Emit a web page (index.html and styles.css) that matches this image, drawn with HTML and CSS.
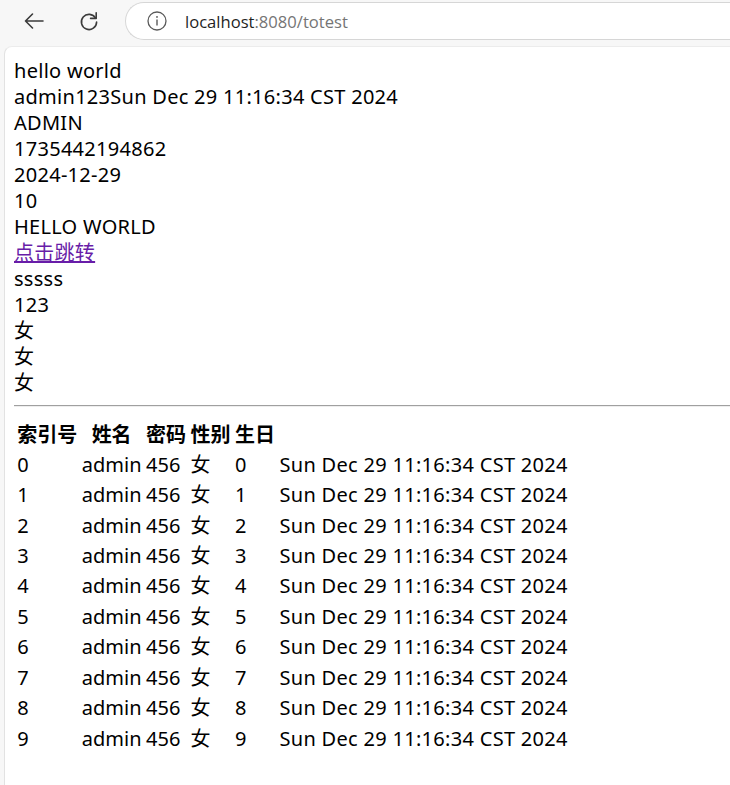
FILE: index.html
```html
<!DOCTYPE html>
<html>
<head>
<meta charset="utf-8">
<title>totest</title>
<link rel="stylesheet" href="styles.css">
</head>
<body>
<div class="chrome">
  <div class="nav-btn back">
    <svg width="24" height="24" viewBox="0 0 24 24"><path d="M21 12H3.5M10.5 5L3.5 12l7 7" fill="none" stroke="#3b3b3b" stroke-width="1.6" stroke-linecap="round" stroke-linejoin="round"/></svg>
  </div>
  <div class="nav-btn reload">
    <svg width="24" height="24" viewBox="0 0 24 24"><path d="M18.6 9.2A7.6 7.6 0 1 0 19.6 13" fill="none" stroke="#3b3b3b" stroke-width="1.6" stroke-linecap="round"/><path d="M19.2 3.8v5.6h-5.6" fill="none" stroke="#3b3b3b" stroke-width="1.6" stroke-linecap="round" stroke-linejoin="round"/></svg>
  </div>
  <div class="omnibox">
    <svg class="info" width="22" height="22" viewBox="0 0 22 22"><circle cx="11" cy="11" r="9" fill="none" stroke="#5a5a5a" stroke-width="1.3"/><path d="M11 9.6v6" stroke="#5a5a5a" stroke-width="1.4"/><circle cx="11" cy="6.9" r="0.95" fill="#5a5a5a"/></svg>
    <span class="url"><span class="host">localhost</span><span class="rest">:8080/totest</span></span>
  </div>
</div>
<div class="page">
  <div class="line">hello world</div>
  <div class="line">admin123Sun Dec 29 11:16:34 CST 2024</div>
  <div class="line">ADMIN</div>
  <div class="line">1735442194862</div>
  <div class="line">2024-12-29</div>
  <div class="line">10</div>
  <div class="line">HELLO WORLD</div>
  <div class="line"><a class="link" href="#">点击跳转</a></div>
  <div class="line">sssss</div>
  <div class="line">123</div>
  <div class="line">女</div>
  <div class="line">女</div>
  <div class="line">女</div>
  <hr class="rule">
  <table class="users">
    <tr><th>索引号</th><th>姓名</th><th>密码</th><th>性别</th><th>生日</th></tr>
    <tr><td>0</td><td>admin</td><td>456</td><td>女</td><td>0</td><td class="date">Sun Dec 29 11:16:34 CST 2024</td></tr>
    <tr><td>1</td><td>admin</td><td>456</td><td>女</td><td>1</td><td class="date">Sun Dec 29 11:16:34 CST 2024</td></tr>
    <tr><td>2</td><td>admin</td><td>456</td><td>女</td><td>2</td><td class="date">Sun Dec 29 11:16:34 CST 2024</td></tr>
    <tr><td>3</td><td>admin</td><td>456</td><td>女</td><td>3</td><td class="date">Sun Dec 29 11:16:34 CST 2024</td></tr>
    <tr><td>4</td><td>admin</td><td>456</td><td>女</td><td>4</td><td class="date">Sun Dec 29 11:16:34 CST 2024</td></tr>
    <tr><td>5</td><td>admin</td><td>456</td><td>女</td><td>5</td><td class="date">Sun Dec 29 11:16:34 CST 2024</td></tr>
    <tr><td>6</td><td>admin</td><td>456</td><td>女</td><td>6</td><td class="date">Sun Dec 29 11:16:34 CST 2024</td></tr>
    <tr><td>7</td><td>admin</td><td>456</td><td>女</td><td>7</td><td class="date">Sun Dec 29 11:16:34 CST 2024</td></tr>
    <tr><td>8</td><td>admin</td><td>456</td><td>女</td><td>8</td><td class="date">Sun Dec 29 11:16:34 CST 2024</td></tr>
    <tr><td>9</td><td>admin</td><td>456</td><td>女</td><td>9</td><td class="date">Sun Dec 29 11:16:34 CST 2024</td></tr>
  </table>
</div>
</body>
</html>
```
FILE: styles.css
```css
html, body {
  margin: 0;
  padding: 0;
  height: 100%;
  overflow: hidden;
}
body {
  background: #f7f7f7;
  font-family: "Noto Sans", "Noto Sans CJK SC", sans-serif;
  color: #000;
  display: flex;
  flex-direction: column;
}
.chrome {
  height: 46px;
  flex: none;
  display: flex;
  align-items: flex-start;
}
.nav-btn {
  width: 24px;
  height: 24px;
  margin-top: 9px;
  display: flex;
  flex: none;
}
.back { margin-left: 22px; }
.reload { margin-left: 31px; }
.omnibox {
  margin-left: 24px;
  margin-top: 2px;
  height: 38px;
  flex: 1;
  box-sizing: border-box;
  background: #fff;
  border: 1px solid #d6d6d6;
  border-right: none;
  border-radius: 19px 0 0 19px;
  display: flex;
  align-items: center;
  padding-left: 20px;
}
.info { flex: none; }
.url {
  margin-left: 17px;
  font-family: "Open Sans", "Noto Sans", sans-serif;
  font-size: 16.6px;
  white-space: nowrap;
}
.host { color: #1f1f1f; }
.rest { color: #757575; }
.page {
  flex: 1;
  margin-left: 4px;
  background: #fff;
  border-left: 1px solid #e2e2e2;
  border-top: 1px solid #ececec;
  border-top-left-radius: 8px;
  padding: 11px 0 0 9px;
  font-size: 20px;
  line-height: 26px;
  letter-spacing: 0.28px;
}
.line { white-space: nowrap; }
.link { color: #681da8; text-decoration: underline; }
.rule {
  margin: 9px 0 11px 0;
  border: none;
  border-top: 1.5px solid #a0a0a0;
  border-bottom: 1px solid #eeeeee;
  height: 0;
}
.users {
  border-collapse: separate;
  border-spacing: 2.5px;
  font-size: 20px;
}
.users th, .users td {
  padding: 1.25px;
  line-height: 25.94px;
  white-space: nowrap;
  letter-spacing: 0;
}
.users th {
  font-weight: bold;
  text-align: center;
  font-family: "Noto Sans CJK SC", sans-serif;
}
.users td { text-align: left; }
.users td.date { letter-spacing: 0.3px; }
```
